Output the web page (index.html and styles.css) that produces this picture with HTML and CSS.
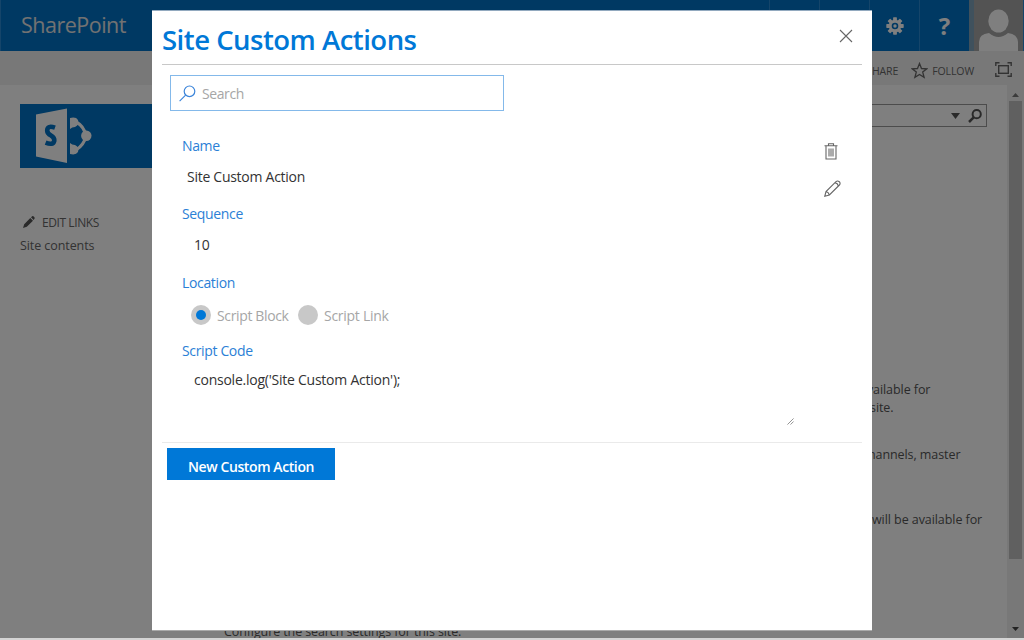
FILE: index.html
```html
<!DOCTYPE html>
<html lang="en">
<head>
<meta charset="utf-8">
<title>Site Custom Actions</title>
<link rel="stylesheet" href="styles.css">
</head>
<body>
<div class="page">
  <header class="suite-bar">
    <div class="brand">SharePoint</div>
    <div class="suite-actions">
      <span class="suite-cell"></span>
      <span class="suite-cell"></span>
      <span class="suite-cell">
        <svg width="18" height="18" viewBox="-9 -9 18 18"><g fill="#fff"><g><rect x="-1.900" y="-8.700" width="3.800" height="17.400" rx=".6"/><rect x="-8.700" y="-1.900" width="17.400" height="3.800" rx=".6"/></g><g transform="rotate(45)"><rect x="-1.900" y="-8.700" width="3.800" height="17.400" rx=".6"/><rect x="-8.700" y="-1.900" width="17.400" height="3.800" rx=".6"/></g></g><circle r="4.800" fill="#0072c6" stroke="#fff" stroke-width="3"/><circle r="1.700" fill="#fff"/></svg>
      </span>
      <span class="suite-cell help">?</span>
      <span class="presence"></span>
      <span class="avatar">
        <svg width="49" height="51" viewBox="0 0 49 51"><ellipse cx="24.500" cy="21" rx="10.200" ry="11.500" fill="#fff"/><path d="M5 51V42Q5 34 15 33Q24.500 41 34 33Q43.500 34 44 42V51Z" fill="#fff"/></svg>
      </span>
    </div>
  </header>
  <div class="ribbon">
    <span class="ribbon-item">SHARE</span>
    <svg class="star" width="17" height="17" viewBox="0 0 17 17"><path d="M8.500 1.500L10.500 6.500L15.800 6.800L11.700 10.100L13.100 15.300L8.500 12.400L3.900 15.300L5.300 10.100L1.200 6.800L6.500 6.500Z" fill="none" stroke="#666" stroke-width="1.300"/></svg>
    <span class="ribbon-item follow">FOLLOW</span>
    <svg class="focus" width="17" height="15" viewBox="0 0 17 15"><g fill="none" stroke="#666" stroke-width="1.400"><path d="M.8 4V.8H4.500M12.500 .8H16.200V4M16.200 11V14.200H12.500M4.500 14.200H.8V11"/><rect x="3.700" y="3.700" width="9.600" height="7.600"/></g></svg>
  </div>
  <main class="workspace">
    <nav class="side">
      <div class="site-logo">
        <svg width="60" height="56" viewBox="0 0 60 56"><path d="M0 6.500L31 .5V55L0 48.500Z" fill="#fff"/><path d="M19 19.700Q11.300 17 11.200 22.500Q11.200 25.500 15 27.500Q18.600 29.500 18.300 32.700Q17.300 37.700 9.600 34.700" fill="none" stroke="#0072c6" stroke-width="4.600"/><path d="M40 14Q48 18 50 28Q48 37 40 42" fill="none" stroke="#fff" stroke-width="3.200"/><path d="M34 10Q40 8.500 42 12Q43.500 17 39 19Q36 19 34 21ZM34 46Q40 47.500 42 44Q43.500 39 39 37Q36 37 34 35Z" fill="#fff"/><circle cx="50.300" cy="27.800" r="5.200" fill="#fff"/></svg>
      </div>
      <div class="edit-links">
        <svg width="12" height="12" viewBox="0 0 12 12"><path d="M0 12L1.200 8.200L7.300 2L10 4.700L3.800 10.800ZM8 1.300L9.200 .2Q10 -.3 11 .7Q12 1.800 11.600 2.500L10.600 3.900Z" fill="#555"/></svg>
        <span>EDIT LINKS</span>
      </div>
      <div class="side-link">Site contents</div>
    </nav>
    <section class="features">
      <div class="site-search">
        <svg width="9" height="6" viewBox="0 0 9 6"><path d="M0 0H9L4.500 6Z" fill="#555"/></svg>
        <svg width="14" height="14" viewBox="0 0 14 14"><circle cx="8.700" cy="5.200" r="4.100" fill="none" stroke="#555" stroke-width="2"/><path d="M5.700 8.400L1 13" stroke="#555" stroke-width="2.500"/></svg>
      </div>
      <p class="feature f1">available for<br><span class="tail">site.</span></p>
      <p class="feature f2">channels, master</p>
      <p class="feature f3">will be available for</p>
      <p class="feature f4">Configure the search settings for this site.</p>
    </section>
    <div class="scrollbar">
      <svg class="up" width="7" height="4" viewBox="0 0 7 4"><path d="M0 4L3.500 0L7 4Z" fill="#777"/></svg>
      <div class="thumb"></div>
      <svg class="down" width="7" height="4" viewBox="0 0 7 4"><path d="M0 0H7L3.500 4Z" fill="#444"/></svg>
    </div>
  </main>
</div>
<div class="overlay">
  <div class="dialog">
    <div class="dialog-head">
      <h1>Site Custom Actions</h1>
      <svg width="14" height="14" viewBox="0 0 14 14"><path d="M1 1L13 13M13 1L1 13" stroke="#666" stroke-width="1.100"/></svg>
    </div>
    <div class="search">
      <svg width="17" height="17" viewBox="0 0 17 17"><g fill="none" stroke="#3c85da" stroke-width="1.200"><circle cx="10.500" cy="6.300" r="5.300"/><path d="M6.600 10.200L.6 16.200"/></g></svg>
      <span>Search</span>
    </div>
    <div class="record">
      <div class="fields">
        <div class="label">Name</div>
        <div class="value name">Site Custom Action</div>
        <div class="label">Sequence</div>
        <div class="value seq">10</div>
        <div class="label">Location</div>
        <div class="choices">
          <span class="radio on"></span><span class="choice first">Script Block</span>
          <span class="radio"></span><span class="choice">Script Link</span>
        </div>
        <div class="label">Script Code</div>
        <div class="code"><span>console.log('Site Custom Action');</span>
          <svg width="7" height="7" viewBox="0 0 8 8"><path d="M.5 7.500L7.500 .5M4 7.500L7.500 4" stroke="#777" stroke-width=".9"/></svg>
        </div>
      </div>
      <div class="tools">
        <svg class="trash" width="14" height="17" viewBox="0 0 14 17"><g fill="none" stroke="#666" stroke-width="1.100"><path d="M.5 2.800H13.500M4.500 2.800V.8H9.500V2.800M2 3V16H12V3M5 5.500V13.500M7 5.500V13.500M9 5.500V13.500"/></g></svg>
        <svg width="17" height="17" viewBox="0 0 17 17"><g fill="none" stroke="#666" stroke-width="1.100"><path d="M.8 16.200L2 11.500L12 1.600Q13.500 .3 15.300 1.700Q16.800 3.500 15.400 5L5.400 15ZM2 11.500Q4.500 12 5.400 15M11 2.600Q13.700 3.300 14.400 6"/></g></svg>
      </div>
    </div>
    <div class="dialog-foot"><button class="primary">New Custom Action</button></div>
  </div>
</div>
</body>
</html>
```
FILE: styles.css
```css
* { box-sizing: border-box; }
body {
  margin: 0;
  height: 640px;
  overflow: hidden;
  position: relative;
  background: #d4d4d4;
  color: #333;
  font-family: "Open Sans", "Noto Sans", sans-serif;
}
svg { display: block; flex: none; }
.page { display: flex; flex-direction: column; height: 638px; background: #fff; }
.suite-bar {
  display: flex;
  justify-content: space-between;
  height: 51px;
  flex: none;
  background: #0072c6;
  border-left: 1px solid #2a8ad4;
  color: #fff;
}
.brand { padding-left: 20px; font-size: 21.500px; line-height: 50px; letter-spacing: -.5px; color: #e4e4e4; }
.suite-actions { display: flex; }
.suite-cell {
  width: 50px;
  border-left: 1px solid #2a8ad4;
  display: flex;
  align-items: center;
  justify-content: center;
}
.help { font-size: 24px; font-weight: 700; }
.presence { width: 5px; background: #7fa3bb; }
.avatar { width: 50px; background: #a6a6a6; border-right: 1px solid #2a8ad4; }
.ribbon {
  display: flex;
  align-items: center;
  height: 34px;
  flex: none;
  padding: 5px 12px 0 0;
  justify-content: flex-end;
  background: #f1f1f1;
  color: #666;
  font-size: 10.500px;
  letter-spacing: -.1px;
}
.star { margin: 0 4px 0 13px; }
.focus { margin: -2px 0 0 21px; }
.workspace { display: flex; flex: 1; min-height: 0; overflow: hidden; }
.side { width: 204px; padding: 19px 0 0 20px; flex: none; }
.site-logo { height: 64px; background: #0072c6; padding: 4px 0 0 16px; }
.edit-links {
  display: flex;
  gap: 7px;
  align-items: center;
  height: 20px;
  margin-top: 44px;
  padding-left: 3px;
  font-size: 12px;
  letter-spacing: -.42px;
  color: #666;
}
.side-link { font-size: 12.500px; line-height: 20px; margin-top: 4px; letter-spacing: -.08px; color: #666; }
.features { flex: 1; display: flex; flex-direction: column; align-items: flex-end; }
.site-search {
  flex: none;
  width: 300px;
  height: 23px;
  margin: 19px 20px 0 0;
  padding: 1px 4px 0 0;
  border: 1px solid #999;
  display: flex;
  align-items: center;
  justify-content: flex-end;
  gap: 8px;
}
.feature { margin: 0; font-size: 12.500px; line-height: 18px; letter-spacing: -.07px; flex: none; white-space: nowrap; color: #555; }
.tail { padding-left: 10px; }
.f1 { width: 147px; margin-top: 254px; }
.f2 { width: 145px; margin-top: 29px; }
.f3 { width: 135px; margin-top: 47px; }
.f4 { width: 783px; margin-top: 94px; letter-spacing: -.1px; }
.scrollbar {
  width: 17px;
  flex: none;
  display: flex;
  flex-direction: column;
  align-items: center;
  padding: 8px 0 7px;
  background: #f1f1f1;
}
.thumb { width: 13px; height: 458px; margin: 4px 0 auto; background: #c1c1c1; }
.overlay {
  position: absolute;
  inset: 0 0 2px;
  background: rgba(0, 0, 0, .5);
  display: flex;
  justify-content: center;
  align-items: flex-start;
  padding-top: 10px;
}
.dialog {
  width: 720px;
  height: 621px;
  background: #fff;
  border-top: 1px solid #92a9bf;
  border-bottom: 1px solid #aaa;
}
.dialog-head {
  display: flex;
  justify-content: space-between;
  height: 54px;
  margin: 0 10px;
  padding: 18px 9px 0 0;
  border-bottom: 1px solid #c8c8c8;
}
h1 { margin: -10px 0 0; font-size: 27.500px; line-height: 42px; font-weight: 600; letter-spacing: -.5px; color: #0078d7; white-space: nowrap; }
.search {
  display: flex;
  gap: 6px;
  align-items: center;
  width: 334px;
  height: 36px;
  margin: 10px 0 0 18px;
  padding-left: 8px;
  border: 1px solid #84b9ea;
  color: #a6a6a6;
  font-size: 14px;
  letter-spacing: -.4px;
}
.record {
  display: flex;
  justify-content: space-between;
  height: 332px;
  margin: 0 10px;
  padding: 25px 21px 0 20px;
  border-bottom: 1px solid #eaeaea;
}
.fields { width: 612px; font-size: 14px; letter-spacing: -.27px; }
.label { line-height: 20px; letter-spacing: -.35px; color: #2b7fd6; }
.value { line-height: 20px; margin: 11px 0 17px 5px; }
.seq { margin-left: 12px; margin-bottom: 18px; }
.choices { display: flex; align-items: center; height: 20px; margin: 12px 0 16px 9px; color: #a6a6a6; }
.radio { width: 20px; height: 20px; border-radius: 50%; background: #c8c8c8; display: flex; }
.on::before { content: ""; width: 10px; height: 10px; margin: 5px; border-radius: 50%; background: #0078d7; }
.choice { padding-left: 6px; }
.first { width: 87px; letter-spacing: -.36px; }
.code {
  display: flex;
  justify-content: space-between;
  align-items: flex-end;
  height: 54px;
  margin-top: 10px;
  padding-left: 12px;
}
.code span { align-self: flex-start; line-height: 18px; letter-spacing: -.24px; }
.tools { width: 18px; display: flex; flex-direction: column; align-items: center; gap: 20px; padding-top: 7px; }
.trash { margin-right: 2px; }
.dialog-foot { padding: 5px 0 0 15px; }
.primary {
  width: 168px;
  height: 32px;
  padding: 4px 0 0;
  border: 0;
  background: #0078d7;
  color: #fff;
  font: 600 14px "Open Sans", sans-serif;
  letter-spacing: -.4px;
}
```
